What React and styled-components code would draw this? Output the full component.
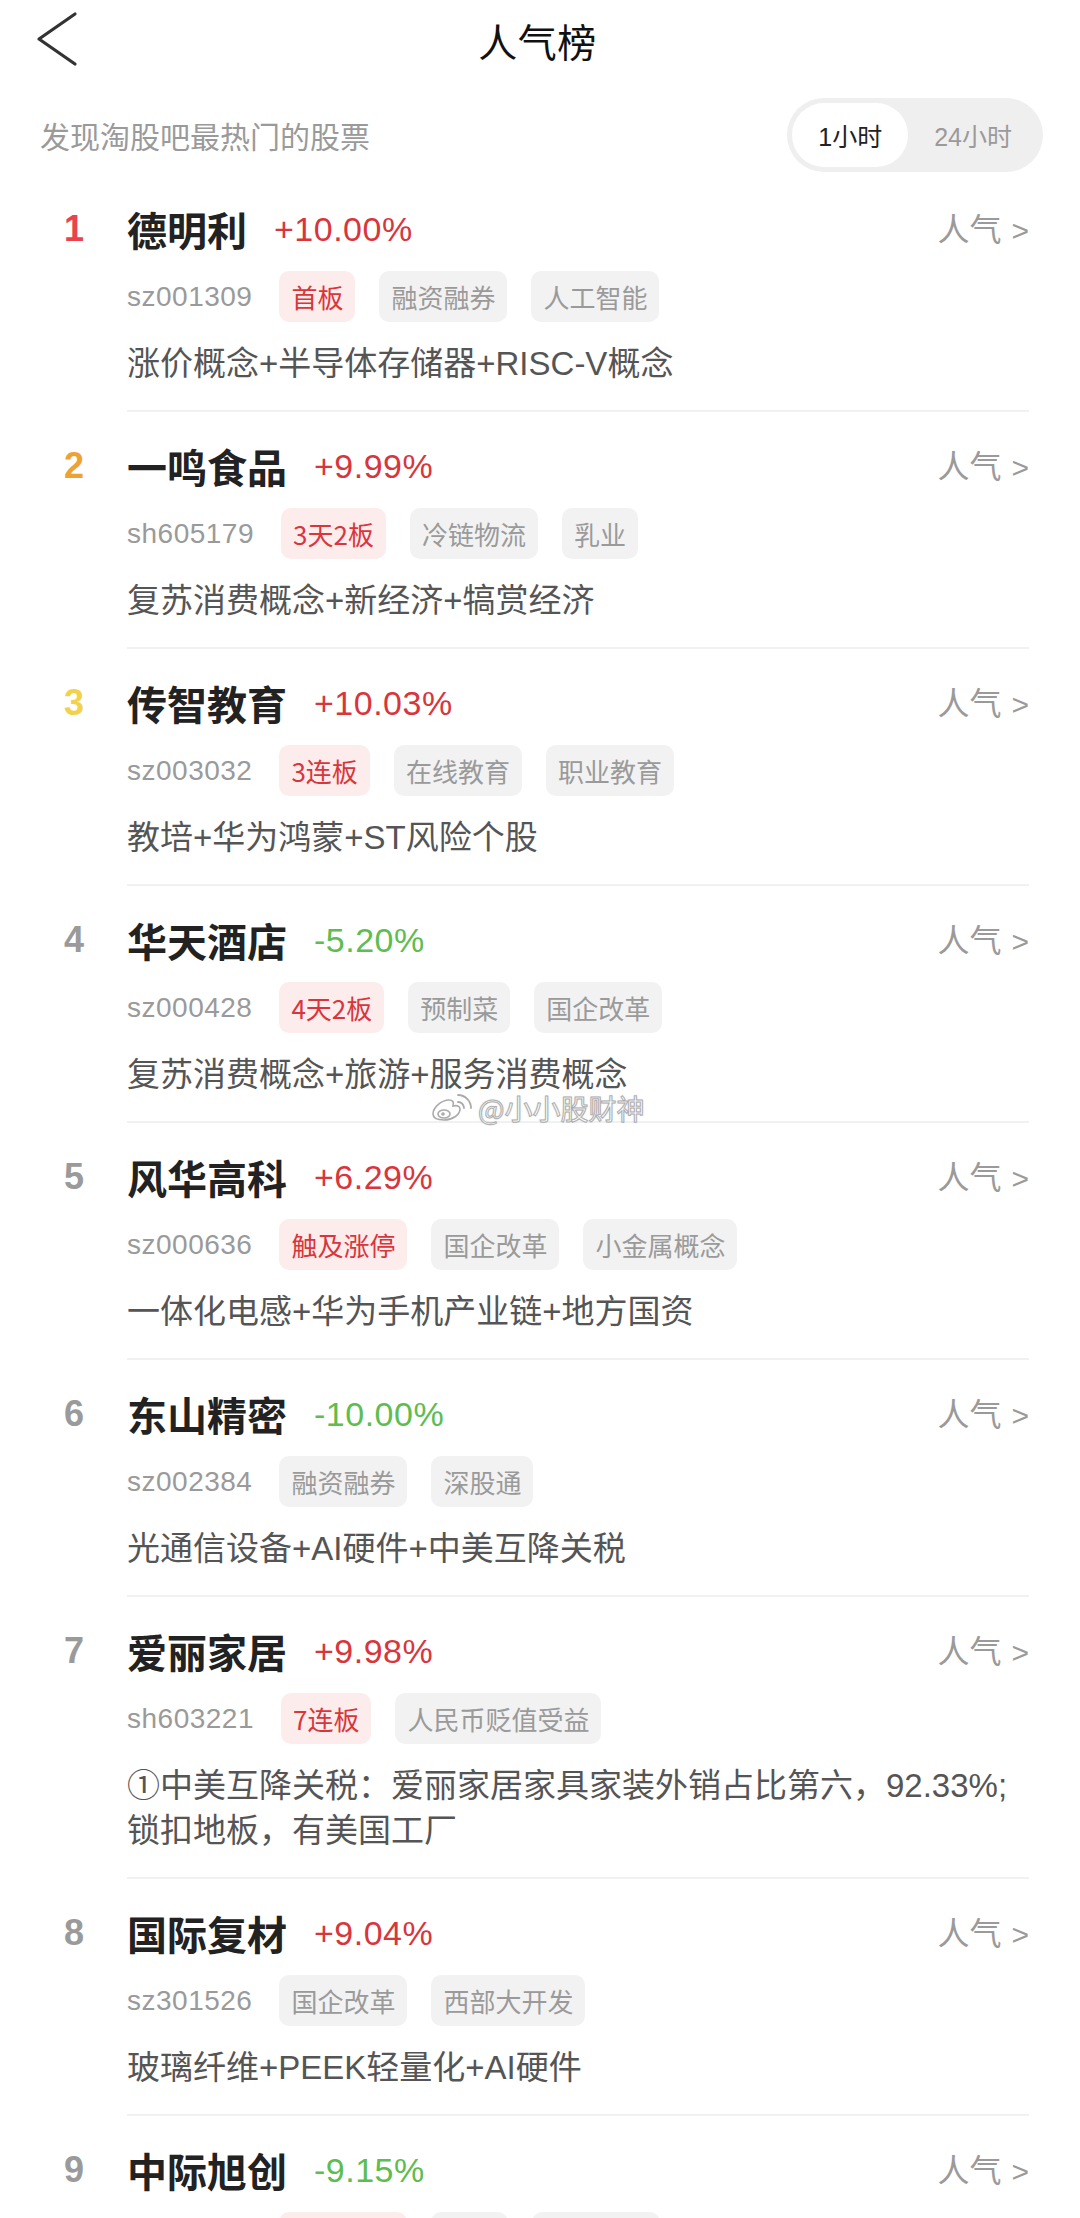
import React from "react";
import styled, { createGlobalStyle } from "styled-components";

const GlobalStyle = createGlobalStyle`
  html, body { margin: 0; padding: 0; background: #ffffff; }
  body {
    font-family: "Liberation Sans", "Noto Sans CJK SC", sans-serif;
    -webkit-font-smoothing: antialiased;
  }
  * { box-sizing: border-box; }
`;

const Page = styled.div`
  position: relative;
  width: 1080px;
  min-height: 2218px;
  background: #fff;
  overflow: hidden;
`;

const NavBar = styled.header`
  display: grid;
  grid-template-columns: 1fr auto 1fr;
  align-items: start;
  height: 90px;
  padding: 0 40px 0 35px;
`;

const BackButton = styled.div`
  display: flex;
  align-items: center;
  margin-top: 10px;
  width: 48px;
  height: 58px;
`;

const Title = styled.h1`
  margin: 0;
  padding-top: 13px;
  line-height: 54px;
  font-family: "Noto Sans CJK SC", sans-serif;
  font-size: 39px;
  font-weight: 400;
  color: #111;
  letter-spacing: 0.5px;
`;

const SubHeader = styled.div`
  display: flex;
  align-items: center;
  justify-content: space-between;
  padding: 8px 37px 3px 40px;
`;

const SubTitle = styled.div`
  font-family: "Noto Sans CJK SC", sans-serif;
  font-size: 30px;
  color: #9a9a9a;
`;

const Toggle = styled.div`
  display: flex;
  align-items: center;
  height: 74px;
  padding: 5px;
  border-radius: 37px;
  background: #efefef;
`;

const Segment = styled.div`
  display: flex;
  align-items: center;
  justify-content: center;
  height: 64px;
  padding: 0 26px;
  border-radius: 32px;
  font-size: 25px;
  color: ${(p) => (p.$active ? "#222" : "#9a9a9a")};
  background: ${(p) => (p.$active ? "#ffffff" : "transparent")};
`;

const List = styled.div`
  display: flex;
  flex-direction: column;
  padding: 0 51px 0 40px;
`;

const Row = styled.div`
  display: flex;
  align-items: flex-start;
`;

const rankColors = { 1: "#e8434f", 2: "#efa234", 3: "#f2d24c" };

const Rank = styled.div`
  flex: 0 0 87px;
  padding: 29px 0 0 24px;
  height: 79px;
  line-height: 50px;
  font-size: 36px;
  font-weight: 700;
  color: ${(p) => rankColors[p.$rank] || "#9a9a9a"};
`;

const Content = styled.div`
  flex: 1;
  display: flex;
  flex-direction: column;
  padding: 29px 0 24px;
  border-bottom: 2px solid #f1f1f1;
`;

const NameLine = styled.div`
  display: flex;
  align-items: center;
  height: 50px;
`;

const Name = styled.span`
  font-family: "Noto Sans CJK SC", sans-serif;
  font-size: 40px;
  font-weight: 700;
  color: #222;
`;

const Change = styled.span`
  margin-left: 27px;
  font-size: 34px;
  letter-spacing: 0.5px;
  color: ${(p) => (p.$up ? "#d8363d" : "#5dbd4f")};
`;

const Hot = styled.span`
  margin-left: auto;
  align-self: flex-start;
  margin-top: 0px;
  font-size: 32px;
  color: #9a9a9a;
  font-family: "Noto Sans CJK SC", sans-serif;
`;

const Arrow = styled.span`
  font-family: "Liberation Sans", sans-serif;
  font-size: 30px;
  margin-left: 10px;
`;

const TagLine = styled.div`
  display: flex;
  align-items: center;
  gap: 24px;
  margin-top: 17px;
  height: 51px;
`;

const Code = styled.span`
  font-size: 28px;
  letter-spacing: 0.5px;
  color: #9a9a9a;
  margin-right: 3px;
`;

const Tag = styled.span`
  display: inline-flex;
  align-items: center;
  height: 51px;
  padding: 0 12px;
  border-radius: 10px;
  font-family: "Noto Sans CJK SC", sans-serif;
  font-size: 26px;
  color: ${(p) => (p.$hot ? "#d8363d" : "#9a9a9a")};
  background: ${(p) => (p.$hot ? "#fdecec" : "#f2f2f2")};
`;

const Desc = styled.div`
  margin-top: 19px;
  font-size: 33px;
  line-height: 45px;
  color: #555;
  white-space: pre-line;
`;

const Watermark = styled.div`
  position: absolute;
  left: 428px;
  top: 1088px;
  display: flex;
  align-items: center;
  gap: 4px;
  pointer-events: none;
`;

const WatermarkText = styled.span`
  font-family: "Noto Sans CJK SC", sans-serif;
  font-size: 28px;
  color: rgba(255, 255, 255, 0.92);
  -webkit-text-stroke: 1px rgba(160, 160, 160, 0.85);
  text-shadow: 0 0 2px rgba(150, 150, 150, 0.5);
`;

const stocks = [
  { name: "德明利", change: "+10.00%", up: true, code: "sz001309", tags: [["首板", true], ["融资融券"], ["人工智能"]], desc: "涨价概念+半导体存储器+RISC-V概念" },
  { name: "一鸣食品", change: "+9.99%", up: true, code: "sh605179", tags: [["3天2板", true], ["冷链物流"], ["乳业"]], desc: "复苏消费概念+新经济+犒赏经济" },
  { name: "传智教育", change: "+10.03%", up: true, code: "sz003032", tags: [["3连板", true], ["在线教育"], ["职业教育"]], desc: "教培+华为鸿蒙+ST风险个股" },
  { name: "华天酒店", change: "-5.20%", up: false, code: "sz000428", tags: [["4天2板", true], ["预制菜"], ["国企改革"]], desc: "复苏消费概念+旅游+服务消费概念" },
  { name: "风华高科", change: "+6.29%", up: true, code: "sz000636", tags: [["触及涨停", true], ["国企改革"], ["小金属概念"]], desc: "一体化电感+华为手机产业链+地方国资" },
  { name: "东山精密", change: "-10.00%", up: false, code: "sz002384", tags: [["融资融券"], ["深股通"]], desc: "光通信设备+AI硬件+中美互降关税" },
  { name: "爱丽家居", change: "+9.98%", up: true, code: "sh603221", tags: [["7连板", true], ["人民币贬值受益"]], desc: "①中美互降关税：爱丽家居家具家装外销占比第六，92.33%;\n锁扣地板，有美国工厂" },
  { name: "国际复材", change: "+9.04%", up: true, code: "sz301526", tags: [["国企改革"], ["西部大开发"]], desc: "玻璃纤维+PEEK轻量化+AI硬件" },
  { name: "中际旭创", change: "-9.15%", up: false, code: "sz300308", tags: [["触及跌停", true], ["CPO"], ["融资融券"]], desc: "光模块+CPO概念+AI硬件" },
];

function BackIcon() {
  return (
    <svg width="44" height="56" viewBox="0 0 44 56">
      <polyline points="40,3 4,28 40,53" fill="none" stroke="#333" strokeWidth="3.2" strokeLinecap="round" strokeLinejoin="round" />
    </svg>
  );
}

function WeiboIcon() {
  return (
    <svg width="46" height="30" viewBox="0 0 46 30">
      <path d="M5 21c0-7 9-14 16-14 4 0 5 2 4 6 4-1 7 0 7 3 0 6-8 11-16 11C9 27 5 25 5 21z" fill="rgba(255,255,255,0.92)" stroke="#aaa" strokeWidth="1.6" />
      <ellipse cx="16" cy="21" rx="6" ry="4" fill="none" stroke="#aaa" strokeWidth="1.6" />
      <circle cx="15" cy="21" r="1.8" fill="#aaa" />
      <path d="M30 9a6 6 0 0 1 6 6" fill="none" stroke="#aaa" strokeWidth="1.8" strokeLinecap="round" />
      <path d="M30 2a13 13 0 0 1 13 13" fill="none" stroke="#aaa" strokeWidth="1.8" strokeLinecap="round" />
    </svg>
  );
}

export default function App() {
  return (
    <Page>
      <GlobalStyle />
      <NavBar>
        <BackButton>
          <BackIcon />
        </BackButton>
        <Title>人气榜</Title>
        <div />
      </NavBar>
      <SubHeader>
        <SubTitle>发现淘股吧最热门的股票</SubTitle>
        <Toggle>
          <Segment $active>1小时</Segment>
          <Segment>24小时</Segment>
        </Toggle>
      </SubHeader>
      <List>
        {stocks.map((s, i) => (
          <Row key={s.code}>
            <Rank $rank={i + 1}>{i + 1}</Rank>
            <Content>
              <NameLine>
                <Name>{s.name}</Name>
                <Change $up={s.up}>{s.change}</Change>
                <Hot>
                  人气<Arrow>&gt;</Arrow>
                </Hot>
              </NameLine>
              <TagLine>
                <Code>{s.code}</Code>
                {s.tags.map(([t, hot]) => (
                  <Tag key={t} $hot={hot}>
                    {t}
                  </Tag>
                ))}
              </TagLine>
              <Desc>{s.desc}</Desc>
            </Content>
          </Row>
        ))}
      </List>
      <Watermark>
        <WeiboIcon />
        <WatermarkText>@小小股财神</WatermarkText>
      </Watermark>
    </Page>
  );
}
